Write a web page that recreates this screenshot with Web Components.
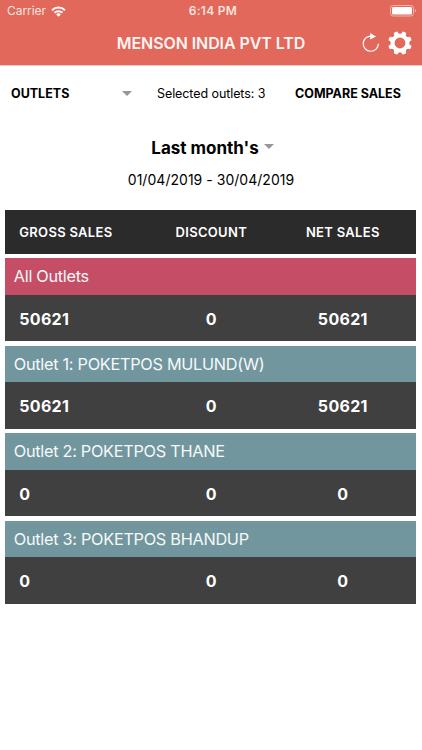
<!DOCTYPE html>
<html lang="en">
<head>
<meta charset="UTF-8">
<meta name="viewport" content="width=device-width, initial-scale=1.0">
<title>Outlet Sales</title>
<style>
    body {
        margin: 0;
        background: #fff;
        color: #000;
        font-family: Inter, "Liberation Sans", sans-serif;
    }
</style>
</head>
<body>
<sales-app></sales-app>

<script>
class StatusBar extends HTMLElement {
    constructor() {
        super();
        this.shadowDOM = this.attachShadow({mode: "open"});
    }

    connectedCallback() {
        this.shadowDOM.innerHTML = `
        <style>
            :host {
                display: grid;
                grid-template-columns: 1fr auto 1fr;
                align-items: center;
                height: 22px;
                padding: 0 5px 0 7px;
                color: #fbe3df;
                font-size: 12px;
                line-height: 22px;
            }
            .carrier {
                display: flex;
                align-items: center;
                gap: 5px;
                letter-spacing: -0.05px;
            }
            .time {
                font-weight: 600;
                letter-spacing: 0.3px;
                margin-left: 2px;
            }
            .battery {
                justify-self: end;
            }
            svg {
                display: block;
            }
        </style>
        <div class="carrier">
            <span>${this.getAttribute("carrier")}</span>
            <svg width="15" height="11" viewBox="0 0 15 11" fill="none" stroke="#fff" stroke-width="1.9">
                <path d="M1 4.2a9.3 9.3 0 0 1 13 0"/>
                <path d="M3.5 6.8a5.8 5.8 0 0 1 8 0"/>
                <path d="M7.5 10.7 5.2 8.4a3.3 3.3 0 0 1 4.6 0z" fill="#fff" stroke="none"/>
            </svg>
        </div>
        <span class="time">${this.getAttribute("time")}</span>
        <svg class="battery" width="27" height="12" viewBox="0 0 27 12">
            <rect x="0.5" y="0.5" width="23" height="10.5" rx="2.6" fill="none" stroke="#f3b3aa"/>
            <rect x="2" y="2" width="20" height="7.5" rx="1.2" fill="#fff"/>
            <path d="M24.9 4v3.6q1.2-.6 1.2-1.8T24.9 4z" fill="#f3b3aa"/>
        </svg>`;
    }
}

class NavBar extends HTMLElement {
    constructor() {
        super();
        this.shadowDOM = this.attachShadow({mode: "open"});
    }

    connectedCallback() {
        let teeth = "";
        for (let i = 0; i < 8; i++) {
            teeth += `<path d="M-3.2 -8.3Q-2 -9.4 -1.9 -11.6Q0 -12.3 1.9 -11.6Q2 -9.4 3.2 -8.3z" transform="rotate(${22.5 + i * 45})"/>`;
        }
        this.shadowDOM.innerHTML = `
        <style>
            :host {
                display: grid;
                grid-template-columns: 1fr auto 1fr;
                align-items: center;
                height: 42px;
                padding: 0 10px;
                color: #fff5f3;
            }
            .title {
                grid-column: 2;
                font-size: 16px;
                font-weight: 600;
                line-height: 20px;
                letter-spacing: -0.08px;
            }
            .actions {
                display: flex;
                justify-content: flex-end;
                align-items: center;
                gap: 8px;
            }
            svg {
                display: block;
            }
            .reload {
                margin-bottom: 1px;
            }
        </style>
        <span class="title"><slot></slot></span>
        <div class="actions">
            <svg class="reload" width="18" height="20" viewBox="0 0 18 20">
                <path d="M9.6 3.1A7.6 7.6 0 1 0 16.4 10.7" fill="none" stroke="#fff" stroke-width="1.2"/>
                <path d="M8.2 0v6.6L14 3.4z" fill="#fff"/>
            </svg>
            <svg width="24" height="24" viewBox="-12 -12 24 24" fill="#fff">
                <circle r="7.4" fill="none" stroke="#fff" stroke-width="3.9"/>
                ${teeth}
            </svg>
        </div>`;
    }
}

class DropArrow extends HTMLElement {
    constructor() {
        super();
        this.attachShadow({mode: "open"}).innerHTML = `
        <style>
            :host {
                display: block;
                width: 0;
                border: 5px solid transparent;
                border-top-color: #979797;
                border-bottom: 0;
            }
        </style>`;
    }
}

class OutletFilter extends HTMLElement {
    constructor() {
        super();
        this.shadowDOM = this.attachShadow({mode: "open"});
    }

    connectedCallback() {
        this.shadowDOM.innerHTML = `
        <style>
            :host {
                display: grid;
                grid-template-columns: 111px 35px 138px 1fr;
                align-items: center;
                height: 55px;
                padding-left: 11px;
                font-size: 12.5px;
                line-height: 16px;
                white-space: nowrap;
            }
            b {
                font-weight: 700;
            }
            .count {
                letter-spacing: -0.08px;
            }
        </style>
        <b>OUTLETS</b>
        <drop-arrow></drop-arrow>
        <span class="count">Selected outlets: ${this.getAttribute("selected")}</span>
        <b>COMPARE SALES</b>`;
    }
}

class DateRange extends HTMLElement {
    constructor() {
        super();
        this.shadowDOM = this.attachShadow({mode: "open"});
    }

    connectedCallback() {
        this.shadowDOM.innerHTML = `
        <style>
            :host {
                display: block;
                padding-top: 15px;
                height: 60px;
                text-align: center;
            }
            .period {
                display: flex;
                justify-content: center;
                align-items: center;
                gap: 5px;
                margin-left: 3px;
                font-size: 17px;
                font-weight: 700;
                line-height: 24px;
            }
            drop-arrow {
                margin-bottom: 3px;
            }
            .dates {
                margin-top: 10px;
                font-size: 14px;
                line-height: 20px;
                letter-spacing: 0.03px;
            }
        </style>
        <div class="period"><slot name="period"></slot><drop-arrow></drop-arrow></div>
        <div class="dates"><slot name="dates"></slot></div>`;
    }
}

class OutletSales extends HTMLElement {
    constructor() {
        super();
        this.shadowDOM = this.attachShadow({mode: "open"});
    }

    set outlet(outlet) {
        this._outlet = outlet;
        this.render();
    }

    render() {
        this.shadowDOM.innerHTML = `
        <style>
            :host {
                display: block;
                color: #fff;
            }
            .name {
                height: 36.6px;
                padding-left: 8.5px;
                background: ${this._outlet.color};
                color: #f7f9fa;
                font-size: 16.3px;
                line-height: 37.2px;
                letter-spacing: -0.29px;
            }
            .values {
                display: grid;
                grid-template-columns: 123px 138px 1fr;
                height: 46.6px;
                padding: 0 11px 0 14px;
                background: #404040;
                font-size: 16px;
                font-weight: 700;
                line-height: 48px;
                letter-spacing: 0.3px;
                text-align: center;
            }
            .values :first-child {
                text-align: left;
            }
        </style>
        <div class="name">${this._outlet.name}</div>
        <div class="values">
            <span>${this._outlet.gross}</span>
            <span>${this._outlet.discount}</span>
            <span>${this._outlet.net}</span>
        </div>`;
    }
}

class SalesTable extends HTMLElement {
    constructor() {
        super();
        this.shadowDOM = this.attachShadow({mode: "open"});
    }

    set outlets(outlets) {
        this._outlets = outlets;
        this.render();
    }

    render() {
        this.shadowDOM.innerHTML = `
        <style>
            :host {
                display: flex;
                flex-direction: column;
                gap: 4.3px;
                margin: 0 5.7px 0 5.3px;
                padding-top: 14px;
            }
            .head {
                display: grid;
                grid-template-columns: 123px 138px 1fr;
                height: 43.8px;
                padding: 0 11px 0 14px;
                background: #2b2b2b;
                color: #fff;
                font-size: 13px;
                font-weight: 600;
                line-height: 44px;
                letter-spacing: 0.3px;
                text-align: center;
            }
            .head :first-child {
                text-align: left;
            }
        </style>
        <div class="head"><span>GROSS SALES</span><span>DISCOUNT</span><span>NET SALES</span></div>`;
        this._outlets.forEach(outlet => {
            const item = document.createElement("outlet-sales");
            item.outlet = outlet;
            this.shadowDOM.appendChild(item);
        });
    }
}

class SalesApp extends HTMLElement {
    constructor() {
        super();
        this.shadowDOM = this.attachShadow({mode: "open"});
    }

    connectedCallback() {
        this.shadowDOM.innerHTML = `
        <style>
            :host {
                display: block;
                height: 750px;
                overflow: hidden;
            }
            header {
                height: 65px;
                background: #e1685b;
                border-bottom: 1px solid #f5c5bf;
            }
        </style>
        <header>
            <status-bar carrier="Carrier" time="6:14 PM"></status-bar>
            <nav-bar>MENSON INDIA PVT LTD</nav-bar>
        </header>
        <outlet-filter selected="3"></outlet-filter>
        <date-range>
            <span slot="period">Last month's</span>
            <span slot="dates">01/04/2019 - 30/04/2019</span>
        </date-range>
        <sales-table></sales-table>`;
        this.shadowDOM.querySelector("sales-table").outlets = [
            {name: "All Outlets", gross: 50621, discount: 0, net: 50621, color: "#c54d65"},
            {name: "Outlet 1: POKETPOS MULUND(W)", gross: 50621, discount: 0, net: 50621, color: "#71969e"},
            {name: "Outlet 2: POKETPOS THANE", gross: 0, discount: 0, net: 0, color: "#71969e"},
            {name: "Outlet 3: POKETPOS BHANDUP", gross: 0, discount: 0, net: 0, color: "#71969e"}
        ];
    }
}

customElements.define("status-bar", StatusBar);
customElements.define("nav-bar", NavBar);
customElements.define("drop-arrow", DropArrow);
customElements.define("outlet-filter", OutletFilter);
customElements.define("date-range", DateRange);
customElements.define("outlet-sales", OutletSales);
customElements.define("sales-table", SalesTable);
customElements.define("sales-app", SalesApp);
</script>
</body>
</html>
